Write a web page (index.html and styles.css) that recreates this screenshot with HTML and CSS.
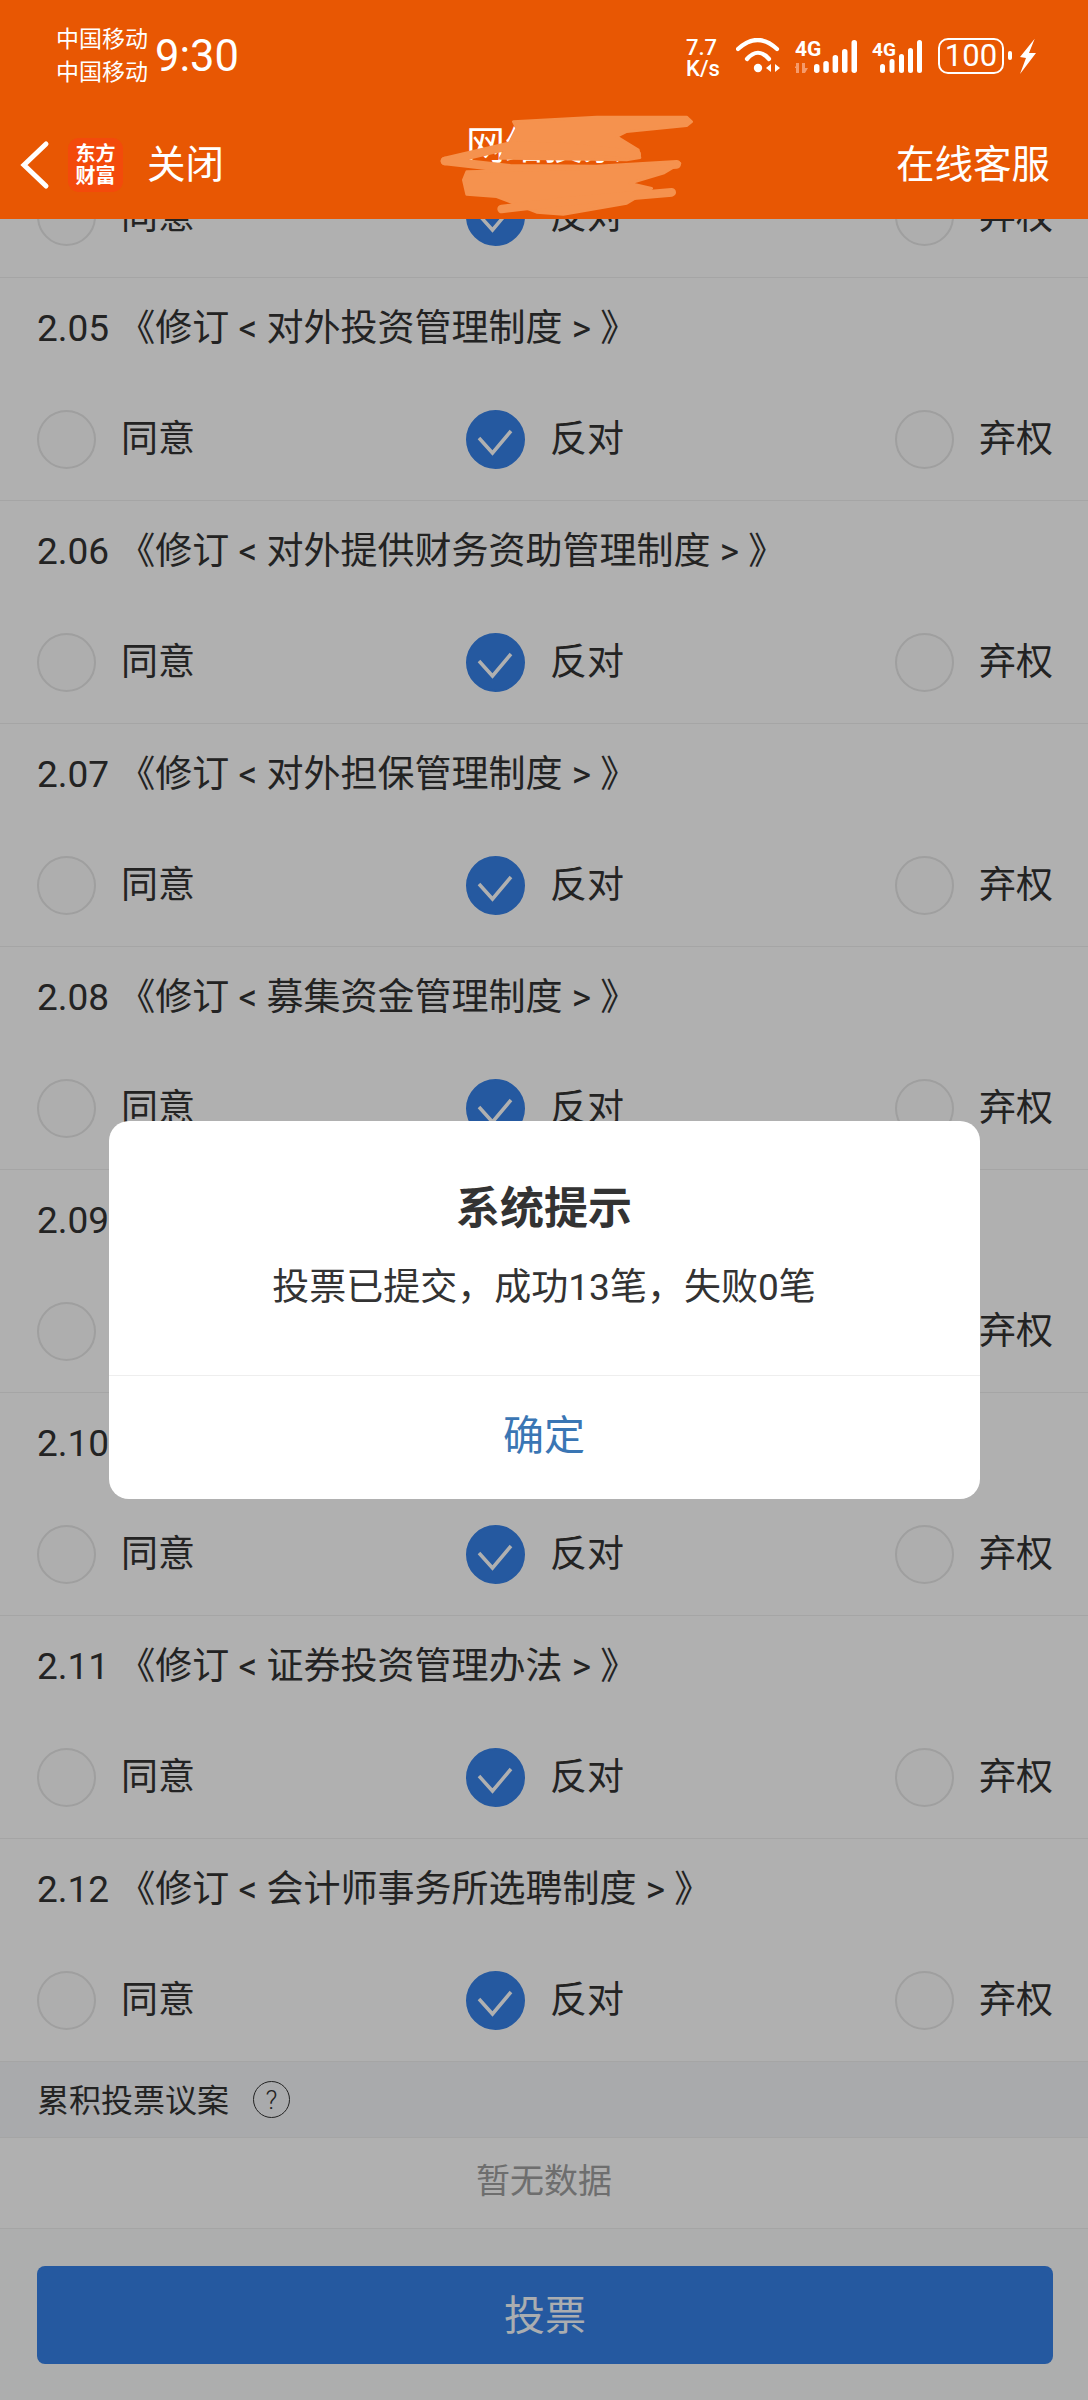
FILE: index.html
```html
<!DOCTYPE html>
<html lang="zh-CN">
<head>
<meta charset="utf-8">
<title>网络投票</title>
<link rel="stylesheet" href="styles.css">
</head>
<body>
<div class="page">
  <header class="app-header">
    <div class="status">
      <div class="carriers"><span>中国移动</span><span>中国移动</span></div>
      <div class="clock">9:30</div>
      <div class="status-right">
        <div class="speed"><span>7.7</span><span>K/s</span></div>
        <svg class="wifi" width="45" height="36" viewBox="0 0 45 36">
          <path class="arc" d="M2 11Q21.500 -7 41 11"/>
          <path class="arc" d="M11 21Q22 8.500 33 21"/>
          <circle class="solid" cx="22" cy="30" r="4.200"/>
          <path class="solid" d="M30 30L35 26V34ZM44 30L39 26V34Z"/>
        </svg>
        <svg class="sig sig-one" width="63" height="36" viewBox="0 0 63 36">
          <text class="sig-text" x="0" y="17">4G</text>
          <path class="faded" d="M1 24H4V34H1ZM7 24H10V34H7ZM1 29L-1 29L4 24ZM13 29L10 34L7 29Z"/>
          <rect class="solid" x="19" y="25" width="5.500" height="9" rx="2.700"/>
          <rect class="solid" x="28.300" y="22" width="5.500" height="12" rx="2.700"/>
          <rect class="solid" x="37.600" y="16" width="5.500" height="18" rx="2.700"/>
          <rect class="solid" x="47" y="10" width="5.500" height="24" rx="2.700"/>
          <rect class="solid" x="56.500" y="1" width="5.500" height="33" rx="2.700"/>
        </svg>
        <svg class="sig sig-two" width="52" height="36" viewBox="0 0 52 36">
          <text class="sig-text small" x="0" y="17">4G</text>
          <rect class="solid" x="8" y="25" width="5" height="9" rx="2.500"/>
          <rect class="solid" x="17.500" y="20" width="5" height="14" rx="2.500"/>
          <rect class="solid" x="27" y="15" width="5" height="19" rx="2.500"/>
          <rect class="solid" x="36" y="9" width="5" height="25" rx="2.500"/>
          <rect class="solid" x="45" y="1" width="5" height="33" rx="2.500"/>
        </svg>
        <div class="battery"><span class="battery-level">100</span></div>
        <span class="battery-nub"></span>
        <svg class="bolt" width="18" height="37" viewBox="0 0 18 37">
          <path class="solid" d="M15.700 .7L1 19L7 20L1 36L17 15L10 15Z"/>
        </svg>
      </div>
    </div>
    <nav class="nav">
      <div class="nav-left">
        <svg class="back" width="30" height="50" viewBox="0 0 30 50">
          <path d="M26 4L4 25L26 46"/>
        </svg>
        <div class="logo"><span>东方</span><span>财富</span></div>
        <span class="nav-close">关闭</span>
      </div>
      <div class="nav-title">网络投票</div>
      <div class="nav-right">在线客服</div>
      <svg class="scribble" width="270" height="115" viewBox="0 0 810 345">
        <path class="scr-fill" d="M250 50L500 36L770 36L785 50L770 62L590 80L560 95L625 135L630 158L590 165L210 160L240 110L260 70Z"/>
        <path class="scr-line" d="M45 168L240 122L400 126L620 148"/>
        <path class="scr-line" d="M45 168L240 190L500 192L740 178"/>
        <path class="scr-fill" d="M110 200L500 190L750 175L700 205L600 235L665 250L590 295L400 328L320 322L200 275L110 268L100 225Z"/>
        <path class="scr-line" d="M215 312L400 290L725 262"/>
      </svg>
    </nav>
  </header>

  <main class="content">
    <section class="row-partial">
      <div class="options">
        <div class="option"><span class="radio"></span><span class="option-text">同意</span></div>
        <div class="option"><span class="radio is-on"><svg class="tick" width="59" height="59" viewBox="0 0 59 59"><path d="M13 28L26.500 43L45 21"/></svg></span><span class="option-text">反对</span></div>
        <div class="option"><span class="radio"></span><span class="option-text">弃权</span></div>
      </div>
    </section>

    <section class="row">
      <div class="row-title">2.05 《修订 &lt; 对外投资管理制度 &gt; 》</div>
      <div class="options">
        <div class="option"><span class="radio"></span><span class="option-text">同意</span></div>
        <div class="option"><span class="radio is-on"><svg class="tick" width="59" height="59" viewBox="0 0 59 59"><path d="M13 28L26.500 43L45 21"/></svg></span><span class="option-text">反对</span></div>
        <div class="option"><span class="radio"></span><span class="option-text">弃权</span></div>
      </div>
    </section>
    <section class="row">
      <div class="row-title">2.06 《修订 &lt; 对外提供财务资助管理制度 &gt; 》</div>
      <div class="options">
        <div class="option"><span class="radio"></span><span class="option-text">同意</span></div>
        <div class="option"><span class="radio is-on"><svg class="tick" width="59" height="59" viewBox="0 0 59 59"><path d="M13 28L26.500 43L45 21"/></svg></span><span class="option-text">反对</span></div>
        <div class="option"><span class="radio"></span><span class="option-text">弃权</span></div>
      </div>
    </section>
    <section class="row">
      <div class="row-title">2.07 《修订 &lt; 对外担保管理制度 &gt; 》</div>
      <div class="options">
        <div class="option"><span class="radio"></span><span class="option-text">同意</span></div>
        <div class="option"><span class="radio is-on"><svg class="tick" width="59" height="59" viewBox="0 0 59 59"><path d="M13 28L26.500 43L45 21"/></svg></span><span class="option-text">反对</span></div>
        <div class="option"><span class="radio"></span><span class="option-text">弃权</span></div>
      </div>
    </section>
    <section class="row">
      <div class="row-title">2.08 《修订 &lt; 募集资金管理制度 &gt; 》</div>
      <div class="options">
        <div class="option"><span class="radio"></span><span class="option-text">同意</span></div>
        <div class="option"><span class="radio is-on"><svg class="tick" width="59" height="59" viewBox="0 0 59 59"><path d="M13 28L26.500 43L45 21"/></svg></span><span class="option-text">反对</span></div>
        <div class="option"><span class="radio"></span><span class="option-text">弃权</span></div>
      </div>
    </section>
    <section class="row">
      <div class="row-title">2.09 《修订 &lt; 关联交易管理制度 &gt; 》</div>
      <div class="options">
        <div class="option"><span class="radio"></span><span class="option-text">同意</span></div>
        <div class="option"><span class="radio is-on"><svg class="tick" width="59" height="59" viewBox="0 0 59 59"><path d="M13 28L26.500 43L45 21"/></svg></span><span class="option-text">反对</span></div>
        <div class="option"><span class="radio"></span><span class="option-text">弃权</span></div>
      </div>
    </section>
    <section class="row">
      <div class="row-title">2.10 《修订 &lt; 信息披露管理制度 &gt; 》</div>
      <div class="options">
        <div class="option"><span class="radio"></span><span class="option-text">同意</span></div>
        <div class="option"><span class="radio is-on"><svg class="tick" width="59" height="59" viewBox="0 0 59 59"><path d="M13 28L26.500 43L45 21"/></svg></span><span class="option-text">反对</span></div>
        <div class="option"><span class="radio"></span><span class="option-text">弃权</span></div>
      </div>
    </section>
    <section class="row">
      <div class="row-title">2.11 《修订 &lt; 证券投资管理办法 &gt; 》</div>
      <div class="options">
        <div class="option"><span class="radio"></span><span class="option-text">同意</span></div>
        <div class="option"><span class="radio is-on"><svg class="tick" width="59" height="59" viewBox="0 0 59 59"><path d="M13 28L26.500 43L45 21"/></svg></span><span class="option-text">反对</span></div>
        <div class="option"><span class="radio"></span><span class="option-text">弃权</span></div>
      </div>
    </section>
    <section class="row">
      <div class="row-title">2.12 《修订 &lt; 会计师事务所选聘制度 &gt; 》</div>
      <div class="options">
        <div class="option"><span class="radio"></span><span class="option-text">同意</span></div>
        <div class="option"><span class="radio is-on"><svg class="tick" width="59" height="59" viewBox="0 0 59 59"><path d="M13 28L26.500 43L45 21"/></svg></span><span class="option-text">反对</span></div>
        <div class="option"><span class="radio"></span><span class="option-text">弃权</span></div>
      </div>
    </section>

    <div class="section-head"><span>累积投票议案</span><span class="help">?</span></div>
    <div class="empty">暂无数据</div>
    <div class="submit-area"><button class="submit">投票</button></div>

    <div class="overlay">
      <div class="dialog">
        <div class="dialog-body">
          <div class="dialog-title">系统提示</div>
          <div class="dialog-msg">投票已提交，成功13笔，失败0笔</div>
        </div>
        <div class="dialog-action">确定</div>
      </div>
    </div>
  </main>
</div>
</body>
</html>
```
FILE: styles.css
```css
* { box-sizing: border-box; }
html, body { margin: 0; padding: 0; }
body {
  background: #fff;
  font-family: Roboto, "Noto Sans CJK SC", sans-serif;
  color: #333;
}
.page {
  width: 1088px;
  height: 2400px;
  overflow: hidden;
  display: flex;
  flex-direction: column;
}

/* header */
.app-header {
  background: #e85703;
  color: #fff;
  flex: none;
  height: 219px;
  display: flex;
  flex-direction: column;
}
.status {
  height: 110px;
  display: flex;
  align-items: flex-start;
  padding: 23px 51px 0 56px;
}
.carriers {
  display: flex;
  flex-direction: column;
  font-size: 23px;
  line-height: 33px;
  width: 99px;
}
.clock {
  font-size: 43.500px;
  line-height: 50px;
  margin-top: 9px;
}
.status-right {
  margin-left: auto;
  margin-top: 14px;
  display: flex;
  align-items: flex-start;
}
.speed {
  display: flex;
  flex-direction: column;
  width: 34px;
  font-size: 22px;
  font-weight: 500;
  line-height: 21px;
  margin-right: 16px;
}
.solid { fill: #fff; }
.faded { fill: #f59a6b; }
.arc { fill: none; stroke: #fff; stroke-width: 4.200; stroke-linecap: round; }
.sig-text { fill: #fff; font-size: 21px; font-weight: 700; }
.sig-text.small { font-size: 19px; }
.wifi { margin: 1px 14px 0 0; }
.sig { margin: 2px 14px 0 0; }
.battery {
  width: 66px;
  height: 36px;
  border: 2px solid #fff;
  border-radius: 10px;
  display: flex;
  align-items: center;
  justify-content: center;
  margin-top: 1px;
}
.battery-level { font-size: 31px; line-height: 32px; }
.battery-nub {
  width: 4px;
  height: 9px;
  background: #fff;
  border-radius: 2px;
  margin: 14px 7px 0 4px;
}
.bolt { margin-top: 1px; }

.nav {
  position: relative;
  flex: 1;
  display: grid;
  grid-template-columns: 1fr auto 1fr;
  align-items: center;
  padding: 0 20px;
}
.nav-left { display: flex; align-items: center; }
.back { flex: none; }
.back path { fill: none; stroke: #fff; stroke-width: 5; stroke-linecap: round; stroke-linejoin: miter; }
.logo {
  width: 55px;
  height: 54px;
  margin-left: 18px;
  background: #f34a0b;
  border-radius: 11px;
  display: flex;
  flex-direction: column;
  align-items: center;
  justify-content: center;
  font-size: 20px;
  line-height: 22px;
  font-weight: 700;
}
.nav-close { font-size: 38.500px; line-height: 50px; margin-left: 24px; }
.nav-title { font-size: 39px; line-height: 50px; margin-bottom: 38px; }
.nav-right { font-size: 38.500px; line-height: 50px; justify-self: end; margin-right: 18px; }
.scribble { position: absolute; left: 430px; top: -5px; }
.scr-fill { fill: #f5924e; stroke: #f5924e; stroke-width: 8; stroke-linejoin: round; }
.scr-line { fill: none; stroke: #f5924e; stroke-width: 26; stroke-linecap: round; stroke-linejoin: round; }

/* content */
.content {
  position: relative;
  flex: 1;
  min-height: 0;
  display: flex;
  flex-direction: column;
}
.row-partial {
  flex: none;
  height: 59px;
  overflow: hidden;
  border-bottom: 1px solid #f0f0f0;
  display: flex;
  flex-direction: column;
  justify-content: flex-end;
}
.row {
  flex: none;
  height: 223px;
  border-bottom: 1px solid #f0f0f0;
}
.row-title {
  height: 100px;
  padding-left: 37px;
  font-size: 37px;
  line-height: 102px;
  white-space: nowrap;
}
.options {
  flex: none;
  height: 122px;
  padding: 0 35px 0 37px;
  display: flex;
  align-items: center;
  justify-content: space-between;
}
.option { display: flex; align-items: center; gap: 25px; }
.option-text { font-size: 37px; line-height: 50px; padding-top: 2px; }
.radio {
  width: 59px;
  height: 59px;
  background: #fcfcfc;
  border: 2px solid #e6e6e6;
  border-radius: 50%;
  display: block;
  flex: none;
  position: relative;
}
.radio.is-on { background: #3681e8; border-color: #3681e8; }
.tick { position: absolute; left: -2px; top: -2px; }
.tick path { fill: none; stroke: #fff; stroke-width: 3.500; }

.section-head {
  flex: none;
  height: 76px;
  background: #f5f6f9;
  border-bottom: 1px solid #f0f0f0;
  padding: 0 0 3px 37px;
  display: flex;
  align-items: center;
  gap: 24px;
  font-size: 32px;
}
.help {
  width: 37px;
  height: 37px;
  border: 1.500px solid #333;
  border-radius: 50%;
  display: flex;
  align-items: center;
  justify-content: center;
  font-size: 26px;
  font-weight: 300;
  line-height: 1;
  margin-top: 3px;
}
.empty {
  flex: none;
  height: 91px;
  background: #fff;
  border-bottom: 1px solid #f0f0f0;
  text-align: center;
  font-size: 34px;
  line-height: 86px;
  color: #a0a0a0;
}
.submit-area {
  flex: 1;
  background: #fbfcfd;
  padding: 37px 35px 0 37px;
}
.submit {
  display: block;
  width: 100%;
  height: 98px;
  border: 0;
  border-radius: 8px;
  background: #3681e8;
  color: #f6fbff;
  font: inherit;
  font-size: 41px;
  padding: 0 0 6px;
}

/* dialog */
.overlay {
  position: absolute;
  inset: 0;
  background: rgba(0, 0, 0, .31);
  display: flex;
  align-items: center;
  justify-content: center;
}
.dialog {
  width: 871px;
  height: 378px;
  background: #fff;
  border-radius: 20px;
  display: flex;
  flex-direction: column;
}
.dialog-body {
  height: 255px;
  border-bottom: 1px solid #eee;
  padding-top: 57px;
  text-align: center;
}
.dialog-title { font-size: 44px; font-weight: 700; line-height: 62px; }
.dialog-msg { font-size: 37px; line-height: 50px; margin-top: 23px; }
.dialog-action {
  flex: 1;
  text-align: center;
  font-size: 41px;
  line-height: 120px;
  color: #3a76b4;
}
```
